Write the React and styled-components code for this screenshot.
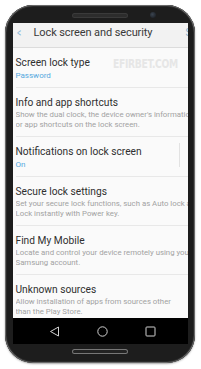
import React from "react";
import styled, { createGlobalStyle } from "styled-components";

const Global = createGlobalStyle`
  html, body { margin: 0; padding: 0; background: #ffffff; }
  body { font-family: Roboto, "Noto Sans", Arial, sans-serif; }
`;

const Page = styled.div`
  width: 201px;
  height: 369px;
  padding: 5px 0 0 5px;
  box-sizing: border-box;
  overflow: hidden;
`;

const Phone = styled.div`
  width: 190px;
  height: 358px;
  border-radius: 28px;
  background: #1d1d1d;
  box-shadow: inset 0 0 0 1px #6a6a6a, inset 0 0 0 2px #2a2a2a, 0 1px 2px rgba(0, 0, 0, 0.35);
  display: flex;
  flex-direction: column;
  align-items: center;
  overflow: hidden;
`;

const TopBezel = styled.div`
  width: 100%;
  height: 18px;
  flex: none;
  display: flex;
  align-items: center;
  padding: 2px 0 0 68px;
  box-sizing: border-box;
  gap: 23px;
`;

const Speaker = styled.div`
  width: 54px;
  height: ${(p) => p.$h}px;
  border-radius: 3px;
  background: ${(p) => p.$bg};
  box-shadow: 0 0 0 1px ${(p) => p.$ring};
`;

const Camera = styled.div`
  width: 6px;
  height: 6px;
  border-radius: 50%;
  background: radial-gradient(circle at 40% 40%, #3b4450, #15181c);
`;

const Screen = styled.div`
  position: relative;
  width: 175px;
  height: 295px;
  flex: none;
  background: #fafafa;
  overflow: hidden;
  display: flex;
  flex-direction: column;
`;

const Header = styled.div`
  height: 25px;
  flex: none;
  box-sizing: border-box;
  background: #f2f2f2;
  border-bottom: 1px solid #dcdcdc;
  display: flex;
  align-items: flex-start;
  padding: 3px 0 0 4px;
  font-size: 11px;
  line-height: 14px;
  color: #3a3a3a;
  white-space: nowrap;
`;

const Back = styled.span`
  color: #8ab8d8;
  font-size: 12px;
  width: 17px;
  flex: none;
  transform: scaleX(0.7);
  transform-origin: left center;
`;

const Title = styled.span`
  flex: 1;
  letter-spacing: -0.1px;
`;

const Search = styled.span`
  color: #8ab0cc;
  font-size: 10px;
  margin-right: -4px;
`;

const List = styled.div`
  display: flex;
  flex-direction: column;
  padding-left: 3px;
`;

const Item = styled.div`
  position: relative;
  padding: 8px 0 6px;
  border-bottom: 1px solid #e8e8e8;
`;

const ItemTitle = styled.div`
  font-size: 10.2px;
  line-height: 14px;
  color: #2f2f2f;
  white-space: nowrap;
`;

const Sub = styled.div`
  font-size: 8px;
  line-height: 10px;
  margin-top: 1px;
  color: #55a8de;
`;

const Desc = styled.div`
  font-size: 7.8px;
  line-height: 10px;
  color: #a2a2a2;
  white-space: nowrap;
  overflow: hidden;
`;

const SwitchSep = styled.div`
  position: absolute;
  right: 8px;
  top: 6px;
  width: 1px;
  height: 24px;
  background: #e2e2e2;
`;

const Watermark = styled.div`
  position: absolute;
  left: 100px;
  top: 33px;
  font-family: "DejaVu Sans Condensed", "Liberation Sans", sans-serif;
  font-weight: bold;
  font-size: 12.5px;
  letter-spacing: -0.4px;
  color: #e6e6e6;
  transform: scaleX(0.82);
  transform-origin: left center;
  pointer-events: none;
`;

const NavBar = styled.div`
  width: 175px;
  height: 26px;
  flex: none;
  background: #000;
  display: flex;
  align-items: center;
  padding-left: 36px;
  gap: 37px;
  box-sizing: border-box;
`;

const BottomBezel = styled.div`
  flex: 1;
  width: 100%;
  display: flex;
  align-items: center;
  justify-content: center;
  padding-bottom: 4px;
  box-sizing: border-box;
`;

const items = [
  { t: "Screen lock type", sub: "Password" },
  {
    t: "Info and app shortcuts",
    d: ["Show the dual clock, the device owner's information", "or app shortcuts on the lock screen."],
  },
  { t: "Notifications on lock screen", sub: "On", sw: true },
  {
    t: "Secure lock settings",
    d: ["Set your secure lock functions, such as Auto lock and", "Lock instantly with Power key."],
  },
  {
    t: "Find My Mobile",
    d: ["Locate and control your device remotely using your", "Samsung account."],
  },
  {
    t: "Unknown sources",
    d: ["Allow installation of apps from sources other", "than the Play Store."],
  },
];

export default function App() {
  return (
    <>
      <Global />
      <Page>
        <Phone>
          <TopBezel>
            <Speaker $h={3} $bg="#2c2c2c" $ring="#3a3a3a" />
            <Camera />
          </TopBezel>
          <Screen>
            <Header>
              <Back>&lt;</Back>
              <Title>Lock screen and security</Title>
              <Search>S</Search>
            </Header>
            <List>
              {items.map((it) => (
                <Item key={it.t}>
                  <ItemTitle>{it.t}</ItemTitle>
                  {it.sub && <Sub>{it.sub}</Sub>}
                  {it.d && it.d.map((l) => <Desc key={l}>{l}</Desc>)}
                  {it.sw && <SwitchSep />}
                </Item>
              ))}
            </List>
            <Watermark>EFIRBET.COM</Watermark>
          </Screen>
          <NavBar>
            <svg width="11" height="11" viewBox="0 0 11 11">
              <path d="M9.5 1 L1.5 5.5 L9.5 10 Z" fill="none" stroke="#d0d0d0" strokeWidth="1" strokeLinejoin="round" />
            </svg>
            <svg width="11" height="11" viewBox="0 0 11 11">
              <circle cx="5.5" cy="5.5" r="4.7" fill="none" stroke="#d0d0d0" strokeWidth="1" />
            </svg>
            <svg width="11" height="11" viewBox="0 0 11 11">
              <rect x="1" y="1" width="9" height="9" rx="0.8" fill="none" stroke="#d0d0d0" strokeWidth="1" />
            </svg>
          </NavBar>
          <BottomBezel>
            <Speaker $h={3} $bg="#232323" $ring="#777" />
          </BottomBezel>
        </Phone>
      </Page>
    </>
  );
}
